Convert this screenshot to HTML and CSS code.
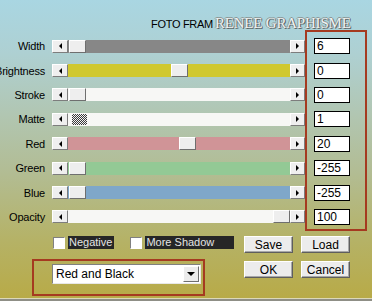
FILE: index.html
```html
<!DOCTYPE html>
<html>
<head>
<meta charset="utf-8">
<link rel="stylesheet" href="styles.css">
</head>
<body>
<div class="dialog">
  <header class="title">
    <span class="title-text">FOTO FRAM</span>
    <span class="watermark">RENEE GRAPHISME</span>
  </header>
  <main class="params">
    <div class="sliders">
      <div class="row"><span class="label">Width</span><div class="slider"><span class="arrow arrow-l"></span><div class="track t-gray"><span class="thumb" style="margin-left:1px"></span></div><span class="arrow arrow-r"></span></div></div>
      <div class="row"><span class="label">Brightness</span><div class="slider"><span class="arrow arrow-l"></span><div class="track t-yellow"><span class="thumb" style="margin-left:103px"></span></div><span class="arrow arrow-r"></span></div></div>
      <div class="row"><span class="label">Stroke</span><div class="slider"><span class="arrow arrow-l"></span><div class="track t-white"><span class="thumb" style="margin-left:1px"></span></div><span class="arrow arrow-r"></span></div></div>
      <div class="row"><span class="label">Matte</span><div class="slider"><span class="arrow arrow-l"></span><div class="track t-white"><span class="thumb thumb-dither" style="margin-left:4px"></span></div><span class="arrow arrow-r"></span></div></div>
      <div class="row"><span class="label">Red</span><div class="slider"><span class="arrow arrow-l"></span><div class="track t-red"><span class="thumb" style="margin-left:111px"></span></div><span class="arrow arrow-r"></span></div></div>
      <div class="row"><span class="label">Green</span><div class="slider"><span class="arrow arrow-l"></span><div class="track t-green"><span class="thumb" style="margin-left:1px"></span></div><span class="arrow arrow-r"></span></div></div>
      <div class="row"><span class="label">Blue</span><div class="slider"><span class="arrow arrow-l"></span><div class="track t-blue"><span class="thumb" style="margin-left:1px"></span></div><span class="arrow arrow-r"></span></div></div>
      <div class="row"><span class="label">Opacity</span><div class="slider"><span class="arrow arrow-l"></span><div class="track t-white"><span class="thumb" style="margin-left:205px"></span></div><span class="arrow arrow-r"></span></div></div>
    </div>
    <div class="values">
      <div class="vrow"><span class="input">6</span></div>
      <div class="vrow"><span class="input">0</span></div>
      <div class="vrow"><span class="input">0</span></div>
      <div class="vrow"><span class="input">1</span></div>
      <div class="vrow"><span class="input">20</span></div>
      <div class="vrow"><span class="input">-255</span></div>
      <div class="vrow"><span class="input">-255</span></div>
      <div class="vrow"><span class="input">100</span></div>
    </div>
  </main>
  <footer class="footer">
    <div class="footer-main">
      <div class="checks">
        <span class="checkbox"></span><span class="check-label">Negative</span>
        <span class="checkbox second"></span><span class="check-label wide">More Shadow</span>
      </div>
      <div class="preset-box">
        <div class="select"><span class="select-text">Red and Black</span><span class="select-btn"></span></div>
      </div>
    </div>
    <div class="buttons">
      <span class="btn">Save</span>
      <span class="btn">Load</span>
      <span class="btn">OK</span>
      <span class="btn">Cancel</span>
    </div>
  </footer>
  <div class="edge"></div>
</div>
</body>
</html>
```
FILE: styles.css
```css
* { box-sizing: border-box; }
html, body { margin: 0; padding: 0; }
body {
  width: 372px;
  height: 301px;
  overflow: hidden;
  font-family: "Liberation Sans", Arial, sans-serif;
  font-size: 11px;
  color: #000;
}
.dialog {
  width: 372px;
  height: 301px;
  display: flex;
  flex-direction: column;
  background: linear-gradient(180deg, #a9d6e2 0%, #aed0d2 18%, #b1c6b2 38%, #b2bc92 58%, #b5b266 80%, #b8aa46 100%);
  overflow: hidden;
}
.title {
  height: 30px;
  display: flex;
  align-items: baseline;
  padding-left: 151px;
  padding-top: 15px;
  white-space: nowrap;
}
.title-text {
  font-size: 11px;
  letter-spacing: -0.3px;
}
.watermark {
  font-family: "Liberation Serif", "Times New Roman", serif;
  font-size: 15px;
  letter-spacing: -0.2px;
  color: #eef2f2;
  margin-left: 2px;
  text-shadow: 1px 1px 0 #5e6868, -1px 0 0 #8c9898, 0 -1px 0 #8c9898, 1px 0 0 #7a8686;
}
.params {
  display: flex;
  align-items: flex-start;
}
.sliders {
  width: 305px;
  padding-top: 4px;
}
.row {
  height: 24.4px;
  display: flex;
  align-items: center;
}
.label {
  width: 45px;
  flex: none;
  display: flex;
  justify-content: flex-end;
  white-space: nowrap;
  letter-spacing: -0.2px;
  margin-right: 7px;
}
.slider {
  width: 253px;
  height: 13px;
  display: flex;
}
.arrow {
  flex: none;
  width: 16px;
  height: 13px;
  background: #efefef;
  border: 1px solid;
  border-color: #ffffff #7d7d7d #7d7d7d #ffffff;
  display: flex;
  align-items: center;
  justify-content: center;
}
.arrow-r { width: 15px; }
.arrow-l::before {
  content: "";
  border-top: 3px solid transparent;
  border-bottom: 3px solid transparent;
  border-right: 3px solid #000;
}
.arrow-r::before {
  content: "";
  border-top: 3px solid transparent;
  border-bottom: 3px solid transparent;
  border-left: 3px solid #000;
}
.track {
  flex: 1;
  display: flex;
}
.t-gray { background: #878787; }
.t-yellow { background: #d0c82f; }
.t-white { background: #f7f7f5; }
.t-red { background: #d09497; }
.t-green { background: #93c995; }
.t-blue { background: #7fa7c9; }
.thumb {
  flex: none;
  width: 17px;
  height: 13px;
  background: #eeeeee;
  border: 1px solid;
  border-color: #ffffff #6f6f6f #6f6f6f #ffffff;
}
.thumb-dither {
  width: 15px;
  height: 11px;
  margin-top: 1px;
  border: none;
  background: repeating-conic-gradient(#3a3a3a 0 25%, #f4f4f4 0 50%) 0 0 / 2px 2px;
}
.values {
  width: 62px;
  border: 2px solid #a53a20;
  padding: 2px 0 0 7px;
}
.vrow {
  height: 24.4px;
  display: flex;
  align-items: center;
}
.input {
  width: 36px;
  height: 16px;
  background: #fff;
  border: 1px solid #000;
  font-size: 12px;
  line-height: 14px;
  padding-left: 2px;
}
.footer {
  display: flex;
  margin-top: 5px;
}
.footer-main {
  width: 244px;
  padding-left: 32px;
}
.checks {
  height: 13px;
  display: flex;
  align-items: center;
  padding-left: 21px;
}
.checkbox {
  width: 12px;
  height: 12px;
  background: #fff;
  border: 1px solid;
  border-color: #808080 #ffffff #ffffff #808080;
  margin-right: 3px;
}
.checkbox.second { margin-left: 16px; }
.check-label {
  background: #262626;
  color: #e4e4e4;
  height: 13px;
  line-height: 13px;
  padding: 0 2px 0 1px;
  font-size: 11px;
}
.check-label.wide { width: 89px; }
.preset-box {
  margin-top: 10px;
  width: 173px;
  height: 37px;
  border: 2px solid #a53a20;
  padding: 3px 2px 0 18px;
}
.select {
  width: 149px;
  height: 20px;
  background: #fff;
  border: 1px solid;
  border-color: #808080 #e8e8e8 #e8e8e8 #808080;
  display: flex;
  align-items: center;
  padding: 0 1px 0 3px;
}
.select-text {
  flex: 1;
  font-size: 12px;
}
.select-btn {
  width: 16px;
  height: 16px;
  background: #ececec;
  border: 1px solid;
  border-color: #ffffff #6f6f6f #6f6f6f #ffffff;
  display: flex;
  align-items: center;
  justify-content: center;
}
.select-btn::before {
  content: "";
  border-left: 4px solid transparent;
  border-right: 4px solid transparent;
  border-top: 4px solid #000;
}
.buttons {
  display: grid;
  grid-template-columns: 49px 49px;
  grid-auto-rows: 17px;
  column-gap: 8px;
  row-gap: 8px;
}
.btn {
  background: #ececec;
  border: 1px solid;
  border-color: #ffffff #5e5e5e #5e5e5e #ffffff;
  box-shadow: inset -1px -1px 0 #a8a8a8;
  display: flex;
  align-items: center;
  justify-content: center;
  font-size: 12px;
}
.edge {
  margin-top: auto;
  height: 3px;
  border-top: 1px solid #dcd8b8;
  background: #8f8f86;
}
```
